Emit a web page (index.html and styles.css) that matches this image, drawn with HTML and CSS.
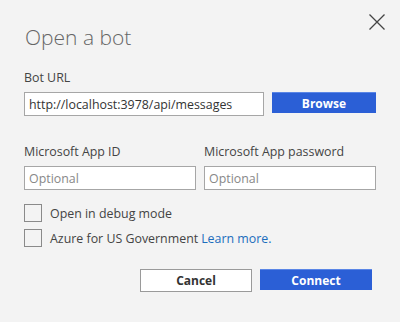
FILE: index.html
```html
<!DOCTYPE html>
<html lang="en">
<head>
    <meta charset="UTF-8" />
    <title>Open a bot</title>
    <link rel="stylesheet" href="styles.css">
</head>
<body>
    <div class="dialog">
        <button class="close" aria-label="Close">
            <svg width="16" height="16" viewBox="0 0 16 16">
                <path d="M0.5 0.5 L15.5 15.5 M15.5 0.5 L0.5 15.5" stroke="#444" stroke-width="1.3" fill="none" />
            </svg>
        </button>
        <h1>Open a bot</h1>

        <div class="field">
            <label>Bot URL</label>
            <div class="url-row">
                <input type="text" class="text-input url-input" value="http://localhost:3978/api/messages">
                <button class="btn btn-primary browse">Browse</button>
            </div>
        </div>

        <div class="creds-row">
            <div class="field">
                <label>Microsoft App ID</label>
                <input type="text" class="text-input" placeholder="Optional">
            </div>
            <div class="field">
                <label>Microsoft App password</label>
                <input type="text" class="text-input" placeholder="Optional">
            </div>
        </div>

        <div class="checks">
            <label class="check"><span class="box"></span>Open in debug mode</label>
            <label class="check"><span class="box"></span>Azure for US Government<a href="#" class="link">Learn more.</a></label>
        </div>

        <div class="actions">
            <button class="btn btn-default">Cancel</button>
            <button class="btn btn-primary">Connect</button>
        </div>
    </div>
</body>
</html>
```

FILE: styles.css
```css
* {
    margin: 0;
    padding: 0;
    box-sizing: border-box;
    font-family: "Open Sans", sans-serif;
}

body {
    background-color: #f3f3f3;
    color: #444;
    width: 400px;
    height: 322px;
}

.dialog {
    position: relative;
    padding: 22px 24px 0 24px;
}

.close {
    position: absolute;
    top: 14px;
    right: 15px;
    width: 16px;
    height: 16px;
    border: none;
    background: none;
    display: flex;
}

h1 {
    font-size: 21px;
    font-weight: 300;
    color: #666;
    line-height: 30px;
    margin-bottom: 18px;
    margin-left: 1px;
}

label {
    font-size: 12.4px;
    color: #444;
}

.field {
    display: flex;
    flex-direction: column;
    gap: 6px;
}

.field label {
    line-height: 16px;
}

.url-row {
    display: flex;
    gap: 8px;
    align-items: flex-start;
}

.text-input {
    height: 24px;
    border: 1px solid #a6a6a6;
    background: #fff;
    padding: 0 4px;
    font-size: 12.4px;
    color: #333;
    outline: none;
}

.text-input::placeholder {
    color: #888;
}

.url-input {
    width: 240px;
}

.browse {
    width: 104px;
}

.btn {
    height: 21px;
    font-size: 12px;
    font-weight: 700;
    border: none;
}

.btn-primary {
    background-color: #2b5fd6;
    color: #fff;
    border-top: 1px solid #5a86e6;
}

.btn-default {
    background-color: #fff;
    color: #333;
    border: 1px solid #9a9a9a;
    height: 23px;
}

.creds-row {
    display: grid;
    grid-template-columns: 172px 172px;
    gap: 8px;
    margin-top: 28px;
}

.checks {
    display: flex;
    flex-direction: column;
    gap: 7px;
    margin-top: 14px;
}

.check {
    display: flex;
    align-items: center;
    height: 18px;
    font-size: 12.4px;
}

.box {
    width: 18px;
    height: 18px;
    border: 1px solid #8a8a8a;
    background: #f3f3f3;
    margin-right: 8px;
}

.link {
    color: #1b6dbd;
    text-decoration: none;
    margin-left: 3px;
}

.actions {
    display: flex;
    justify-content: flex-end;
    gap: 8px;
    margin-top: 22px;
    padding-right: 4px;
}

.actions .btn {
    width: 112px;
}
```
